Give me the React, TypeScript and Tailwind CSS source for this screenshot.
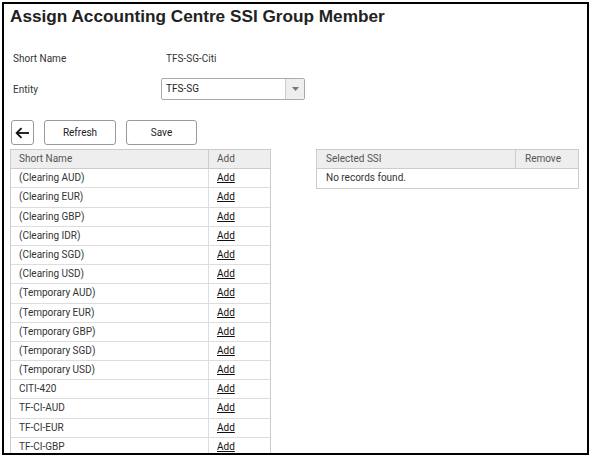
import React from 'react';

const rows = [
  '(Clearing AUD)',
  '(Clearing EUR)',
  '(Clearing GBP)',
  '(Clearing IDR)',
  '(Clearing SGD)',
  '(Clearing USD)',
  '(Temporary AUD)',
  '(Temporary EUR)',
  '(Temporary GBP)',
  '(Temporary SGD)',
  '(Temporary USD)',
  'CITI-420',
  'TF-CI-AUD',
  'TF-CI-EUR',
  'TF-CI-GBP',
];

export default function App() {
  return (
    <div className="w-[591px] h-[458px] bg-white p-[2px] font-['Roboto',sans-serif] text-[10px] text-[#333]">
      <div className="h-[453px] w-[587px] border-2 border-black overflow-hidden">
        {/* Title */}
        <h1 className="pl-[6px] pt-[2px] h-[24px] font-['Liberation_Sans',Arial,sans-serif] font-bold text-[17.2px] leading-[20px] text-[#222]">
          Assign Accounting Centre SSI Group Member
        </h1>

        {/* Form */}
        <div className="mt-[21px] pl-[9px]">
          <div className="flex items-center h-[18px]">
            <span className="w-[153px]">Short Name</span>
            <span>TFS-SG-Citi</span>
          </div>
          <div className="flex items-center mt-[11px] h-[22px]">
            <span className="w-[148px]">Entity</span>
            <div className="flex w-[144px] h-[22px] border border-[#aaa] rounded-[2px] bg-white">
              <span className="flex-1 pl-[4px] leading-[20px] text-[#222]">TFS-SG</span>
              <div className="w-[19px] bg-[#eee] border-l border-[#ccc] flex items-center justify-center">
                <svg width="7" height="4" viewBox="0 0 7 4">
                  <path d="M0 0 L7 0 L3.5 4 Z" fill="#777" />
                </svg>
              </div>
            </div>
          </div>
        </div>

        {/* Buttons */}
        <div className="flex gap-[10px] mt-[20px] pl-[7px]">
          <button className="w-[23px] h-[25px] border border-[#999] rounded-[3px] flex items-center justify-center bg-white">
            <svg width="15" height="12" viewBox="0 0 15 12" fill="none" stroke="#111" strokeWidth="1.8">
              <path d="M14 6 H2" />
              <path d="M6.5 1.2 L1.6 6 L6.5 10.8" />
            </svg>
          </button>
          <button className="w-[72px] h-[25px] border border-[#999] rounded-[3px] bg-white text-[#222]">Refresh</button>
          <button className="w-[71px] h-[25px] border border-[#999] rounded-[3px] bg-white text-[#222]">Save</button>
        </div>

        {/* Tables */}
        <div className="flex items-start mt-[4px] pl-[6px]">
          <div className="w-[261px] border border-[#ccc] border-b-0">
            <div className="flex h-[19.2px] bg-[#eee] border-b border-[#ccc] text-[#555]">
              <div className="w-[198px] pl-[8px] leading-[18px] border-r border-[#ccc]">Short Name</div>
              <div className="flex-1 pl-[8px] leading-[18px]">Add</div>
            </div>
            {rows.map((r) => (
              <div key={r} className="flex h-[19.2px] border-b border-[#ddd]">
                <div className="w-[198px] pl-[8px] leading-[18px] border-r border-[#ddd]">{r}</div>
                <div className="flex-1 pl-[8px] leading-[18px]">
                  <a className="underline text-[#111]">Add</a>
                </div>
              </div>
            ))}
          </div>

          <div className="ml-[45px] w-[263px] border border-[#ccc]">
            <div className="flex h-[19.2px] bg-[#eee] border-b border-[#ccc] text-[#555]">
              <div className="w-[199px] pl-[9px] leading-[18px] border-r border-[#ccc]">Selected SSI</div>
              <div className="flex-1 pl-[9px] leading-[18px]">Remove</div>
            </div>
            <div className="h-[18.5px] pl-[9px] leading-[18px]">No records found.</div>
          </div>
        </div>
      </div>
    </div>
  );
}
